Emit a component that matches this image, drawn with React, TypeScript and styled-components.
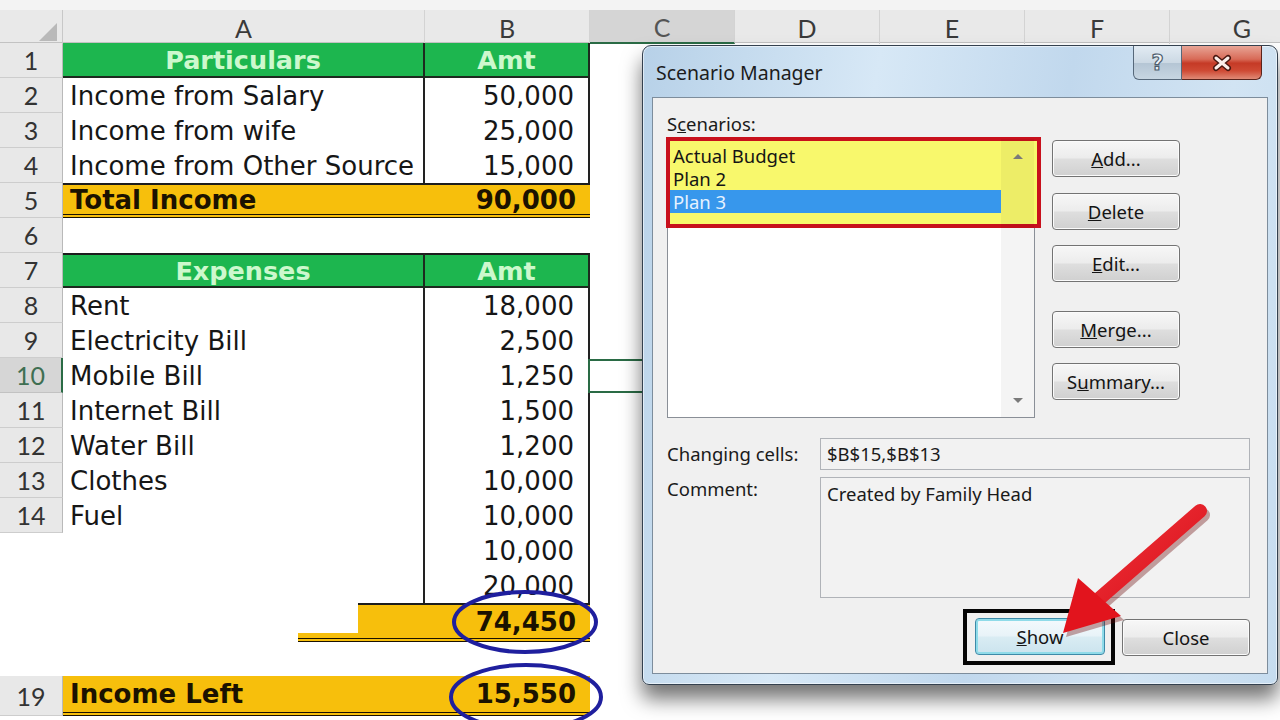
import React from "react";
import styled, { createGlobalStyle, css } from "styled-components";

const GlobalStyle = createGlobalStyle`
  html, body { margin: 0; padding: 0; background: #fff; overflow: hidden; }
  #root { width: 1280px; height: 720px; }
`;

const COLS = "63px 362px 165px 145px 145px 145px 145px 145px";

const Page = styled.div`
  position: relative;
  width: 1280px;
  height: 720px;
  overflow: hidden;
  background: #fff;
`;

const Sheet = styled.div`
  display: flex;
  flex-direction: column;
  width: 1315px;
  font-family: "DejaVu Sans", Verdana, sans-serif;
`;

const TopStrip = styled.div`
  height: 10px;
  background: #f3f3f3;
`;

const ColumnHeaderRow = styled.div`
  display: grid;
  grid-template-columns: ${COLS};
  height: 33px;
  box-sizing: border-box;
  background: #e9e9e9;
  border-bottom: 1px solid #c2c2c2;
`;

const Corner = styled.div`
  position: relative;
  border-right: 1px solid #c8c8c8;
`;

const CornerTriangle = styled.div`
  position: absolute;
  right: 5px;
  bottom: 3px;
  width: 18px;
  height: 18px;
  background: #b9b9b9;
  clip-path: polygon(100% 0, 100% 100%, 0 100%);
`;

const ColHead = styled.div<{ $active?: boolean }>`
  display: flex;
  align-items: center;
  justify-content: center;
  padding-top: 2px;
  font-family: Lato, "Liberation Sans", sans-serif;
  font-size: 25px;
  color: #3a3a3a;
  border-right: 1px solid #d3d3d3;
  box-sizing: border-box;
  ${(p) =>
    p.$active &&
    css`
      background: #d5d5d5;
      color: #555;
      border-bottom: 2px solid #2a6b45;
    `}
`;

const Row = styled.div<{ $h: number }>`
  display: grid;
  grid-template-columns: ${COLS};
  height: ${(p) => p.$h}px;
`;

type HeadKind = "normal" | "active" | "none";

const RowHead = styled.div<{ $kind: HeadKind }>`
  display: flex;
  align-items: center;
  justify-content: center;
  box-sizing: border-box;
  font-family: Lato, "Liberation Sans", sans-serif;
  font-size: 25px;
  color: #333;
  ${(p) =>
    p.$kind === "normal" &&
    css`
      background: #e8e8e8;
      border-bottom: 1px solid #cdcdcd;
      border-right: 1px solid #b9b9b9;
    `}
  ${(p) =>
    p.$kind === "active" &&
    css`
      background: #d6d6d6;
      color: #3f6f52;
      border-bottom: 1px solid #c2c2c2;
      border-right: 2px solid #2a6b45;
    `}
`;

type CellKind = "head" | "plain" | "total" | "empty";

const cellBase = css<{ $kind: CellKind; $topLine?: boolean }>`
  display: flex;
  align-items: center;
  box-sizing: border-box;
  font-size: 26px;
  white-space: nowrap;
  overflow: hidden;
  color: #161616;
  ${(p) =>
    p.$kind === "head" &&
    css`
      justify-content: center;
      background: #1db64f;
      color: #cdf8cd;
      font-weight: bold;
      font-size: 25.5px;
      border-right: 2px solid #1d2a1f;
      border-bottom: 2px solid #1d2a1f;
    `}
  ${(p) =>
    p.$kind === "plain" &&
    css`
      background: #fff;
      border-right: 2px solid #222;
    `}
  ${(p) =>
    p.$kind === "total" &&
    css`
      background: #f7bf0c;
      font-weight: bold;
      color: #1b1200;
      border-bottom: 4px double #1b1200;
    `}
  ${(p) =>
    p.$topLine &&
    css`
      border-top: 2px solid #1d1d1d;
    `}
`;

const NameCell = styled.div<{ $kind: CellKind; $topLine?: boolean }>`
  ${cellBase};
  padding-left: 7px;
  ${(p) => p.$kind === "head" && css`padding-left: 0;`}
`;

const AmtCell = styled.div<{ $kind: CellKind; $topLine?: boolean }>`
  ${cellBase};
  justify-content: flex-end;
  padding-right: 14px;
  ${(p) => p.$kind === "head" && css`justify-content: center; padding-right: 0;`}
`;

const SelectedCell = styled.div`
  box-sizing: border-box;
  border: 2px solid #2a6b45;
  margin: 1px 0 0 -2px;
`;

const StepCell = styled.div`
  display: flex;
  justify-content: flex-end;
  align-items: flex-end;
`;

const StepLedge = styled.div`
  width: 60px;
  height: 5px;
  background: #f7bf0c;
  border-bottom: 4px double #1b1200;
`;

const StepBlock = styled.div`
  width: 67px;
  align-self: stretch;
  box-sizing: border-box;
  background: #f7bf0c;
  border-top: 2px solid #1d1d1d;
  border-bottom: 4px double #1b1200;
`;

/* ---------- dialog ---------- */

const Dialog = styled.div`
  position: absolute;
  left: 642px;
  top: 45px;
  width: 636px;
  height: 640px;
  box-sizing: border-box;
  border: 1px solid #34414f;
  border-radius: 9px 9px 7px 7px;
  background: linear-gradient(100deg, #b7d1e8 0%, #d7e8f6 32%, #c1d8ed 58%, #d2e4f3 80%, #c6dcef 100%);
  box-shadow: 0 14px 20px rgba(0, 0, 0, 0.55), inset 0 0 0 1px rgba(255, 255, 255, 0.55);
  display: flex;
  flex-direction: column;
  padding: 0 9px 10px 9px;
  font-family: "Noto Sans", "Open Sans", sans-serif;
  color: #1a1a1a;
`;

const TitleBar = styled.div`
  height: 51px;
  display: flex;
  align-items: flex-start;
`;

const Title = styled.div`
  flex: 1;
  margin-top: 15px;
  padding-left: 4px;
  font-size: 19.5px;
  line-height: 24px;
  color: #1c1c1c;
`;

const CaptionButtons = styled.div`
  display: flex;
  margin-right: 6px;
`;

const HelpButton = styled.div`
  width: 49px;
  height: 34px;
  box-sizing: border-box;
  display: flex;
  align-items: center;
  justify-content: center;
  border: 1px solid #56687a;
  border-top: none;
  border-radius: 0 0 0 6px;
  background: linear-gradient(#e2ebf3 0%, #ccd9e4 50%, #b4c5d4 51%, #c7d6e2 100%);
  font-family: "DejaVu Sans", sans-serif;
  font-weight: bold;
  font-size: 21px;
  color: #eef3f8;
  -webkit-text-stroke: 1.2px #4d5d6c;
`;

const CloseButton = styled.div`
  width: 80px;
  height: 34px;
  box-sizing: border-box;
  display: flex;
  align-items: center;
  justify-content: center;
  border: 1px solid #5a241c;
  border-top: none;
  border-left: none;
  border-radius: 0 0 6px 0;
  background: linear-gradient(#e8a596 0%, #d86a57 40%, #c53a26 52%, #cf4a34 75%, #e08a76 100%);
`;

const Client = styled.div`
  flex: 1;
  box-sizing: border-box;
  background: #f0f0f0;
  border: 1px solid #7d8d9c;
  padding: 14px 17px 0 14px;
  display: flex;
  flex-direction: column;
  font-size: 18.5px;
`;

const TopSection = styled.div`
  display: flex;
  gap: 17px;
`;

const ListColumn = styled.div`
  display: flex;
  flex-direction: column;
  gap: 2px;
`;

const Label = styled.div`
  line-height: 24px;
  color: #1a1a1a;
`;

const ListBox = styled.div`
  position: relative;
  width: 368px;
  height: 280px;
  box-sizing: border-box;
  border: 1px solid #8a8f97;
  background: #fff;
  display: flex;
`;

const Highlight = styled.div`
  position: absolute;
  left: -2px;
  top: -2px;
  width: 375px;
  height: 91px;
  box-sizing: border-box;
  border: 4px solid #c8101c;
  background: #f8f86c;
`;

const Items = styled.div`
  position: relative;
  flex: 1;
  padding: 5px 0 0 2px;
`;

const Item = styled.div<{ $selected?: boolean }>`
  height: 23px;
  line-height: 23px;
  padding-left: 3px;
  color: #151515;
  ${(p) =>
    p.$selected &&
    css`
      background: #3797ec;
      color: #e6f2ff;
    `}
`;

const ScrollTrack = styled.div`
  position: relative;
  width: 33px;
  display: flex;
  flex-direction: column;
  justify-content: space-between;
  align-items: center;
  padding: 15px 0 14px;
  background: rgba(0, 0, 0, 0.045);
`;

const Arrow = styled.div<{ $down?: boolean }>`
  width: 0;
  height: 0;
  border-left: 5px solid transparent;
  border-right: 5px solid transparent;
  ${(p) =>
    p.$down
      ? css`border-top: 5px solid #7a7a7a;`
      : css`border-bottom: 5px solid #7a7a7a;`}
`;

const ButtonColumn = styled.div`
  display: flex;
  flex-direction: column;
  padding-top: 28px;
`;

const WinButton = styled.div<{ $w: number; $focused?: boolean; $mt?: number }>`
  width: ${(p) => p.$w}px;
  height: 37px;
  margin-top: ${(p) => p.$mt ?? 0}px;
  box-sizing: border-box;
  display: flex;
  align-items: center;
  justify-content: center;
  border: 1px solid #737373;
  border-radius: 4px;
  background: linear-gradient(#f7f7f7 0%, #ececec 48%, #dedede 52%, #d0d0d0 100%);
  box-shadow: inset 0 0 0 1px #fbfbfb;
  font-size: 18.5px;
  color: #141414;
  ${(p) =>
    p.$focused &&
    css`
      border-color: #3d8aa8;
      background: linear-gradient(#f4fafd 0%, #e8f3f8 48%, #d9ecf3 52%, #cbe4ee 100%);
      box-shadow: inset 0 0 0 2px #8fdbe9;
    `}
`;

const Fields = styled.div`
  margin-top: 20px;
  display: grid;
  grid-template-columns: 153px 430px;
  grid-template-rows: 32px 121px;
  row-gap: 7px;
`;

const FieldLabel = styled.div<{ $top?: boolean }>`
  line-height: 24px;
  align-self: ${(p) => (p.$top ? "start" : "center")};
`;

const TextBox = styled.div<{ $multi?: boolean }>`
  box-sizing: border-box;
  border: 1px solid #b0b3b8;
  background: #f2f2f2;
  padding-left: 6px;
  display: flex;
  align-items: ${(p) => (p.$multi ? "flex-start" : "center")};
  padding-top: ${(p) => (p.$multi ? 4 : 0)}px;
  line-height: 24px;
`;

const ButtonRow = styled.div`
  margin-top: 11px;
  display: flex;
  justify-content: flex-end;
  align-items: center;
  gap: 7px;
`;

const ShowFrame = styled.div`
  border: 4px solid #050505;
  padding: 5px 6px 6px 8px;
`;

const Annotations = styled.svg`
  position: absolute;
  left: 0;
  top: 0;
  pointer-events: none;
`;

type SheetRow = {
  n?: string;
  head: HeadKind;
  h: number;
  name?: string;
  amt?: string;
  kind: CellKind;
  topLine?: boolean;
  step?: boolean;
  selected?: boolean;
};

const rows: SheetRow[] = [
  { n: "1", head: "normal", h: 35, name: "Particulars", amt: "Amt", kind: "head" },
  { n: "2", head: "normal", h: 35, name: "Income from Salary", amt: "50,000", kind: "plain" },
  { n: "3", head: "normal", h: 35, name: "Income from wife", amt: "25,000", kind: "plain" },
  { n: "4", head: "normal", h: 35, name: "Income from Other Source", amt: "15,000", kind: "plain" },
  { n: "5", head: "normal", h: 35, name: "Total Income", amt: "90,000", kind: "total", topLine: true },
  { n: "6", head: "normal", h: 35, kind: "empty" },
  { n: "7", head: "normal", h: 35, name: "Expenses", amt: "Amt", kind: "head", topLine: true },
  { n: "8", head: "normal", h: 35, name: "Rent", amt: "18,000", kind: "plain" },
  { n: "9", head: "normal", h: 35, name: "Electricity Bill", amt: "2,500", kind: "plain" },
  { n: "10", head: "active", h: 35, name: "Mobile Bill", amt: "1,250", kind: "plain", selected: true },
  { n: "11", head: "normal", h: 35, name: "Internet Bill", amt: "1,500", kind: "plain" },
  { n: "12", head: "normal", h: 35, name: "Water Bill", amt: "1,200", kind: "plain" },
  { n: "13", head: "normal", h: 35, name: "Clothes", amt: "10,000", kind: "plain" },
  { n: "14", head: "normal", h: 35, name: "Fuel", amt: "10,000", kind: "plain" },
  { head: "none", h: 35, name: "", amt: "10,000", kind: "plain" },
  { head: "none", h: 35, name: "", amt: "20,000", kind: "plain" },
  { head: "none", h: 39, amt: "74,450", kind: "total", topLine: true, step: true },
  { head: "none", h: 34, kind: "empty" },
  { n: "19", head: "normal", h: 40, name: "Income Left", amt: "15,550", kind: "total" },
];

const columns = ["A", "B", "C", "D", "E", "F", "G"];

export default function App() {
  return (
    <Page>
      <GlobalStyle />
      <Sheet>
        <TopStrip />
        <ColumnHeaderRow>
          <Corner>
            <CornerTriangle />
          </Corner>
          {columns.map((c) => (
            <ColHead key={c} $active={c === "C"}>
              {c}
            </ColHead>
          ))}
        </ColumnHeaderRow>
        {rows.map((r, i) => (
          <Row key={i} $h={r.h}>
            <RowHead $kind={r.head}>{r.n}</RowHead>
            {r.step ? (
              <StepCell>
                <StepLedge />
                <StepBlock />
              </StepCell>
            ) : (
              <NameCell $kind={r.kind} $topLine={r.topLine}>
                {r.name}
              </NameCell>
            )}
            <AmtCell $kind={r.kind} $topLine={r.topLine}>
              {r.amt}
            </AmtCell>
            {r.selected && <SelectedCell />}
          </Row>
        ))}
      </Sheet>

      <Dialog>
        <TitleBar>
          <Title>Scenario Manager</Title>
          <CaptionButtons>
            <HelpButton>?</HelpButton>
            <CloseButton>
              <svg width="22" height="18" viewBox="0 0 22 18">
                <path d="M5 4 L17 14 M17 4 L5 14" stroke="#4a1710" strokeWidth="6" strokeLinecap="round" />
                <path d="M5 4 L17 14 M17 4 L5 14" stroke="#fbeeea" strokeWidth="3" strokeLinecap="round" />
              </svg>
            </CloseButton>
          </CaptionButtons>
        </TitleBar>
        <Client>
          <TopSection>
            <ListColumn>
              <Label>
                S<u>c</u>enarios:
              </Label>
              <ListBox>
                <Highlight />
                <Items>
                  <Item>Actual Budget</Item>
                  <Item>Plan 2</Item>
                  <Item $selected>Plan 3</Item>
                </Items>
                <ScrollTrack>
                  <Arrow />
                  <Arrow $down />
                </ScrollTrack>
              </ListBox>
            </ListColumn>
            <ButtonColumn>
              <WinButton $w={128}>
                <u>A</u>dd...
              </WinButton>
              <WinButton $w={128} $mt={16}>
                <u>D</u>elete
              </WinButton>
              <WinButton $w={128} $mt={15}>
                <u>E</u>dit...
              </WinButton>
              <WinButton $w={128} $mt={29}>
                <u>M</u>erge...
              </WinButton>
              <WinButton $w={128} $mt={15}>
                S<u>u</u>mmary...
              </WinButton>
            </ButtonColumn>
          </TopSection>
          <Fields>
            <FieldLabel>Changing cells:</FieldLabel>
            <TextBox>$B$15,$B$13</TextBox>
            <FieldLabel $top>Comment:</FieldLabel>
            <TextBox $multi>Created by Family Head</TextBox>
          </Fields>
          <ButtonRow>
            <ShowFrame>
              <WinButton $w={130} $focused>
                <u>S</u>how
              </WinButton>
            </ShowFrame>
            <WinButton $w={128}>Close</WinButton>
          </ButtonRow>
        </Client>
      </Dialog>

      <Annotations width="1280" height="720" viewBox="0 0 1280 720">
        <defs>
          <linearGradient id="arrowFill" x1="0" y1="0" x2="1" y2="1">
            <stop offset="0" stopColor="#f0333a" />
            <stop offset="1" stopColor="#d8101a" />
          </linearGradient>
        </defs>
        <ellipse cx="525" cy="622" rx="71" ry="30" fill="none" stroke="#1f1f9e" strokeWidth="4" />
        <ellipse cx="526" cy="697" rx="75" ry="32" fill="none" stroke="#1f1f9e" strokeWidth="4" />
        <g opacity="0.35" transform="translate(3,4)">
          <path d="M1200 511 L1100 598" stroke="#600" strokeWidth="14" strokeLinecap="round" />
          <polygon points="1063,633 1078,578 1121,616" fill="#600" />
        </g>
        <path d="M1200 511 L1100 598" stroke="url(#arrowFill)" strokeWidth="14" strokeLinecap="round" />
        <polygon points="1063,633 1078,578 1121,616" fill="#e2141d" />
      </Annotations>
    </Page>
  );
}
